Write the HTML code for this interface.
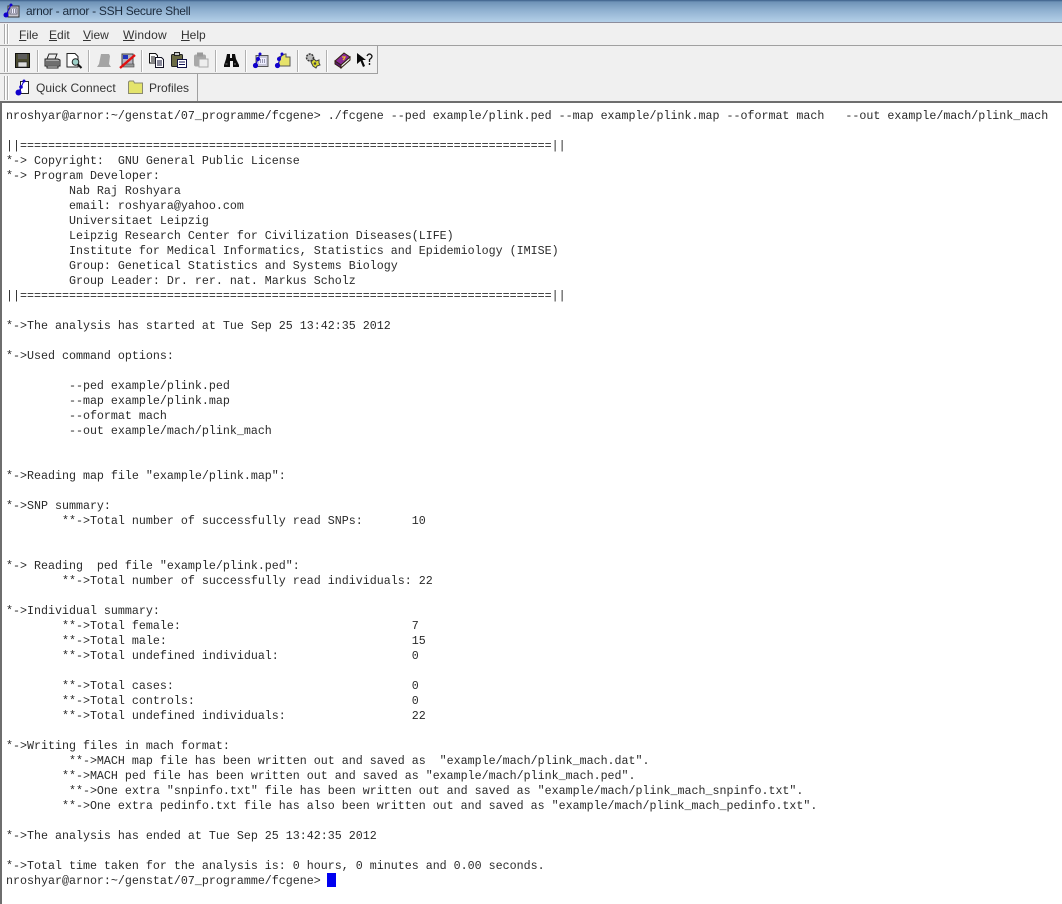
<!DOCTYPE html>
<html><head><meta charset="utf-8"><title>arnor - arnor - SSH Secure Shell</title>
<style>
html,body{margin:0;padding:0;background:#fff}
#w{position:relative;width:1062px;height:904px;overflow:hidden;background:#fff}
.a{position:absolute}
#title{left:0;top:0;width:1062px;height:22px;background:linear-gradient(#3b5e88 0,#6f93b8 2px,#8fb0d0 10px,#b4d0e8 22px);border-bottom:1px solid #8d8d9c}
#tt{left:26px;top:3px;font:12px/16px "Liberation Sans",sans-serif;letter-spacing:-.28px;color:#1b2a3c;white-space:pre}
#bar{left:0;top:23px;width:1062px;height:79px;background:#f0f0f0}
.m{top:27px;font:12px/16px "Liberation Sans",sans-serif;color:#333;white-space:pre}
.m u{text-decoration:underline}
.g{width:1px;background:#aaa;border-right:1px solid #fff}
.s{width:1px;height:22px;top:50px;background:#b0b0b0;border-right:1px solid #fff}
#l1{left:0;top:45px;width:1062px;height:1px;background:#a0a0a0}
#tb{left:0;top:46px;width:377px;height:27px;border-right:1px solid #a0a0a0;border-bottom:1px solid #a0a0a0;box-sizing:content-box}
#qb{left:0;top:74px;width:197px;height:27px;border-right:1px solid #a0a0a0}
#term{left:0;top:101px;width:1062px;height:803px;background:#fff;border-top:2px solid #6e6e6e;border-left:2px solid #6e6e6e;box-sizing:border-box}
pre{position:absolute;left:6px;top:109px;margin:0;font:11.667px/15px "Liberation Mono",monospace;color:#2a2a2a;white-space:pre}
#cur{left:327px;top:873px;width:9px;height:14px;background:#0000f0}
svg{position:absolute;overflow:visible}
</style></head><body><div id="w">
<div id="title" class="a"></div>
<svg style="left:2px;top:2px" width="20" height="18" viewBox="0 0 20 18"><rect x="6" y="4" width="11" height="11" fill="#c8c8d0" stroke="#333"/><rect x="8" y="6" width="7" height="6" fill="#eef" stroke="#667"/><path d="M9 8h5M9 10h5" stroke="#334" stroke-dasharray="1 1"/><circle cx="4" cy="13" r="2.500" fill="#10c"/><circle cx="9" cy="3" r="1.500" fill="#10c"/><path d="M4 13L9 3" stroke="#10c"/></svg>
<div id="tt" class="a">arnor - arnor - SSH Secure Shell</div>
<div id="bar" class="a"></div>
<div class="a g" style="left:4px;top:24px;height:20px"></div><div class="a g" style="left:7px;top:24px;height:20px"></div>
<div class="a m" style="left:19px"><u>F</u>ile</div>
<div class="a m" style="left:49px"><u>E</u>dit</div>
<div class="a m" style="left:83px"><u>V</u>iew</div>
<div class="a m" style="left:123px;letter-spacing:.2px"><u>W</u>indow</div>
<div class="a m" style="left:181px"><u>H</u>elp</div>
<div id="l1" class="a"></div>
<div id="tb" class="a"></div>
<div id="qb" class="a"></div>
<div class="a g" style="left:4px;top:48px;height:24px"></div><div class="a g" style="left:7px;top:48px;height:24px"></div>
<div class="a g" style="left:4px;top:76px;height:24px"></div><div class="a g" style="left:7px;top:76px;height:24px"></div>
<div class="a s" style="left:37px"></div><div class="a s" style="left:88px"></div><div class="a s" style="left:141px"></div><div class="a s" style="left:215px"></div><div class="a s" style="left:245px"></div><div class="a s" style="left:297px"></div><div class="a s" style="left:326px"></div>
<!-- save -->
<svg style="left:15px;top:53px" width="15" height="15" viewBox="0 0 15 15"><rect x=".5" y=".5" width="14" height="14" fill="#4a4a30" stroke="#111"/><rect x="3" y="1" width="9" height="5" fill="#5c5c5c"/><rect x="3" y="9" width="9" height="5" fill="#ddd" stroke="#222" stroke-width=".6"/></svg>
<!-- print -->
<svg style="left:44px;top:53px" width="17" height="16" viewBox="0 0 17 16"><path d="M5 1h8l-2 5H3z" fill="#eee" stroke="#222"/><path d="M1 6h13l2 1v6H1z" fill="#aaa" stroke="#222"/><path d="M2 9h13M2 11h13" stroke="#333"/><path d="M3 13h11v2H3z" fill="#eee" stroke="#222"/></svg>
<!-- preview -->
<svg style="left:66px;top:53px" width="17" height="16" viewBox="0 0 17 16"><path d="M1 .5h8l3 3V14H1z" fill="#fff" stroke="#222"/><circle cx="9.500" cy="9" r="3.300" fill="#9ed0c8" stroke="#222"/><path d="M12 11.500l3.500 3.500" stroke="#111" stroke-width="2"/></svg>
<!-- gray -->
<svg style="left:96px;top:53px" width="16" height="15" viewBox="0 0 16 15"><path d="M5 1h8l1 2-1 8 2 3H1l2-3z" fill="#a4a4a4"/></svg>
<!-- disconnect -->
<svg style="left:119px;top:53px" width="17" height="16" viewBox="0 0 17 16"><rect x="3" y="1" width="11" height="11" fill="#b4b4c0" stroke="#444"/><rect x="4" y="2" width="5" height="4" fill="#2233bb"/><rect x="4" y="11" width="11" height="3" fill="#999" stroke="#444" stroke-width=".6"/><path d="M1 15L16 2" stroke="#e01010" stroke-width="2.400"/></svg>
<!-- copy -->
<svg style="left:149px;top:53px" width="16" height="15" viewBox="0 0 16 15"><path d="M.5.500h6l2 2V10H.5z" fill="#fff" stroke="#111"/><path d="M2 4h4M2 6h4M2 8h4" stroke="#111"/><path d="M6.500 4.500h6l2 2v8h-8z" fill="#fff" stroke="#112"/><path d="M8 8h5M8 10h5M8 12h5" stroke="#113"/></svg>
<!-- paste -->
<svg style="left:171px;top:52px" width="16" height="16" viewBox="0 0 16 16"><rect x=".5" y="2.500" width="11" height="12" rx="1" fill="#6b6b45" stroke="#222"/><rect x="3.500" y=".5" width="5" height="3" fill="#ccc" stroke="#222"/><rect x="6.500" y="7.500" width="9" height="8" fill="#fff" stroke="#114"/><path d="M8 10h6M8 12.500h6" stroke="#115"/></svg>
<svg style="left:193px;top:52px" width="16" height="16" viewBox="0 0 16 16"><rect x="1" y="2.500" width="12" height="12" rx="2" fill="#a8a8a8"/><rect x="4" y=".5" width="6" height="4" fill="#999"/><rect x="6" y="7" width="9" height="8" fill="#eee" stroke="#aaa"/></svg>
<!-- binoculars -->
<svg style="left:223px;top:53px" width="16" height="15" viewBox="0 0 16 15"><path d="M4 1h3v4h2V1h3l1 5 3 6v2h-6V8H7v6H1v-2l2-6z" fill="#0c0c0c"/><path d="M2.500 11h2M11 11h2" stroke="#777"/></svg>
<!-- new terminal -->
<svg style="left:252px;top:52px" width="17" height="17" viewBox="0 0 17 17"><rect x="4" y="3.500" width="12" height="11" fill="#c8c8d8" stroke="#555"/><rect x="7" y="6" width="7" height="6" fill="#eef"/><path d="M8 8h5M8 10h5" stroke="#446" stroke-dasharray="1 1"/><circle cx="3.500" cy="13.500" r="2.600" fill="#10c"/><circle cx="8" cy="2" r="1.500" fill="#10c"/><circle cx="6" cy="7" r="2" fill="#10c"/><path d="M3.500 13.500L8 2" stroke="#10c"/></svg>
<!-- folder conn -->
<svg style="left:274px;top:52px" width="17" height="17" viewBox="0 0 17 17"><path d="M5 5l6-3h1v3h4v9H5z" fill="#e6e26a" stroke="#555"/><circle cx="3.500" cy="13.500" r="2.600" fill="#10c"/><circle cx="8" cy="2" r="1.500" fill="#10c"/><circle cx="5" cy="7" r="2" fill="#10c"/><path d="M3.500 13.500L8 2" stroke="#10c"/></svg>
<!-- settings -->
<svg style="left:304px;top:52px" width="17" height="17" viewBox="0 0 17 17"><circle cx="6" cy="5.500" r="3.500" fill="#bbb" stroke="#333" stroke-width="1.500" stroke-dasharray="2 1"/><path d="M7 10l3-3 2 2 3-1v3l1 2-3 1-1 2-3-2-1-2z" fill="#dcdc30" stroke="#444"/><circle cx="11" cy="11.500" r="1.300" fill="#444"/></svg>
<!-- help book -->
<svg style="left:334px;top:52px" width="17" height="17" viewBox="0 0 17 17"><path d="M1 9l9-8 6 4-9 8z" fill="#8a2a96" stroke="#321"/><path d="M1 9l6 4v3l-6-4z" fill="#5a1a70" stroke="#321"/><path d="M7 13l9-8v3l-9 8z" fill="#eee" stroke="#321"/><path d="M8 5h3l-1 2-1 1" fill="none" stroke="#f0c020" stroke-width="1.300"/></svg>
<!-- whats this -->
<svg style="left:357px;top:53px" width="16" height="16" viewBox="0 0 16 16"><path d="M0 0l9 7H5.500l2.500 6-2 1-2.500-6L0 11z" fill="#0a0a0a"/><path d="M10 3q1-2 2.500-2t2.500 2q0 2-2.500 3.500V9" fill="none" stroke="#111" stroke-width="1.300"/><path d="M12.500 10v2" stroke="#111" stroke-width="1.400"/></svg>
<!-- quick connect -->
<svg style="left:15px;top:78px" width="15" height="18" viewBox="0 0 15 18"><path d="M5.500 3.500h8v12h-8z" fill="#fff" stroke="#222"/><circle cx="3.500" cy="14.500" r="3" fill="#10c"/><circle cx="9" cy="3" r="1.500" fill="#10c"/><circle cx="6" cy="9" r="1.800" fill="#10c"/><path d="M3.500 14.500L9 3" stroke="#10c"/></svg>
<div class="a m" style="left:36px;top:80px;letter-spacing:.08px">Quick Connect</div>
<svg style="left:128px;top:80px" width="16" height="14" viewBox="0 0 16 14"><path d="M.5 13.500V2l1-1h4l1 2h8v10.500z" fill="#e4e46c" stroke="#8a8a70"/></svg>
<div class="a m" style="left:149px;top:80px;">Profiles</div>
<div id="term" class="a"></div>
<pre>nroshyar@arnor:~/genstat/07_programme/fcgene&gt; ./fcgene --ped example/plink.ped --map example/plink.map --oformat mach   --out example/mach/plink_mach

||============================================================================||
*-&gt; Copyright:  GNU General Public License
*-&gt; Program Developer:
         Nab Raj Roshyara
         email: roshyara@yahoo.com
         Universitaet Leipzig
         Leipzig Research Center for Civilization Diseases(LIFE)
         Institute for Medical Informatics, Statistics and Epidemiology (IMISE)
         Group: Genetical Statistics and Systems Biology
         Group Leader: Dr. rer. nat. Markus Scholz
||============================================================================||

*-&gt;The analysis has started at Tue Sep 25 13:42:35 2012

*-&gt;Used command options:

         --ped example/plink.ped
         --map example/plink.map
         --oformat mach
         --out example/mach/plink_mach


*-&gt;Reading map file "example/plink.map":

*-&gt;SNP summary:
        **-&gt;Total number of successfully read SNPs:       10


*-&gt; Reading  ped file "example/plink.ped":
        **-&gt;Total number of successfully read individuals: 22

*-&gt;Individual summary:
        **-&gt;Total female:                                 7
        **-&gt;Total male:                                   15
        **-&gt;Total undefined individual:                   0

        **-&gt;Total cases:                                  0
        **-&gt;Total controls:                               0
        **-&gt;Total undefined individuals:                  22

*-&gt;Writing files in mach format:
         **-&gt;MACH map file has been written out and saved as  "example/mach/plink_mach.dat".
        **-&gt;MACH ped file has been written out and saved as "example/mach/plink_mach.ped".
         **-&gt;One extra "snpinfo.txt" file has been written out and saved as "example/mach/plink_mach_snpinfo.txt".
        **-&gt;One extra pedinfo.txt file has also been written out and saved as "example/mach/plink_mach_pedinfo.txt".

*-&gt;The analysis has ended at Tue Sep 25 13:42:35 2012

*-&gt;Total time taken for the analysis is: 0 hours, 0 minutes and 0.00 seconds.
nroshyar@arnor:~/genstat/07_programme/fcgene&gt; </pre>
<div id="cur" class="a"></div>
</div></body></html>
